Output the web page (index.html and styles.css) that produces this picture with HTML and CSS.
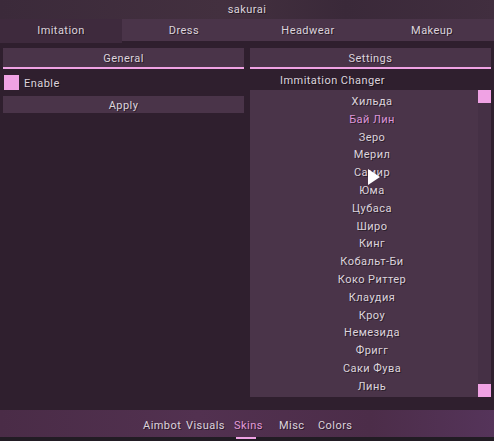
FILE: index.html
```html
<!DOCTYPE html>
<html lang="en">
<head>
    <meta charset="UTF-8">
    <title>sakurai</title>
    <link rel="stylesheet" href="styles.css">
</head>
<body>
    <div class="window">
        <div class="titlebar">sakurai</div>

        <div class="tabs">
            <div class="tab active">Imitation</div>
            <div class="tab">Dress</div>
            <div class="tab">Headwear</div>
            <div class="tab">Makeup</div>
        </div>

        <div class="content">
            <div class="column">
                <div class="section-header">General</div>
                <label class="check-row">
                    <span class="checkbox"></span>
                    <span>Enable</span>
                </label>
                <div class="button">Apply</div>
            </div>

            <div class="column">
                <div class="section-header">Settings</div>
                <div class="field-label">Immitation Changer</div>
                <div class="listbox">
                    <div class="list-items">
                        <div class="list-item">Хильда</div>
                        <div class="list-item selected">Бай Лин</div>
                        <div class="list-item">Зеро</div>
                        <div class="list-item">Мерил</div>
                        <div class="list-item">Самир</div>
                        <div class="list-item">Юма</div>
                        <div class="list-item">Цубаса</div>
                        <div class="list-item">Широ</div>
                        <div class="list-item">Кинг</div>
                        <div class="list-item">Кобальт-Би</div>
                        <div class="list-item">Коко Риттер</div>
                        <div class="list-item">Клаудия</div>
                        <div class="list-item">Кроу</div>
                        <div class="list-item">Немезида</div>
                        <div class="list-item">Фригг</div>
                        <div class="list-item">Саки Фува</div>
                        <div class="list-item">Линь</div>
                    </div>
                    <div class="scrollbar">
                        <span class="thumb"></span>
                        <span class="thumb"></span>
                    </div>
                </div>
            </div>
        </div>

        <div class="bottom-nav">
            <span class="nav-item">Aimbot</span>
            <span class="nav-item">Visuals</span>
            <span class="nav-item active">Skins</span>
            <span class="nav-item">Misc</span>
            <span class="nav-item">Colors</span>
        </div>
        <div class="footer-strip"></div>

        <!-- mouse pointer captured in the screenshot -->
        <svg class="cursor" width="14" height="18" viewBox="0 0 14 18">
            <path d="M1 1 L1 17 L13 9 Z" fill="#ffffff"/>
        </svg>
    </div>
</body>
</html>
```

FILE: styles.css
```css
:root {
    --bg-dark: #2f1f2e;
    --panel: #4a3449;
    --panel-dark: #3e2a3d;
    --accent: #f0a2e4;
    --text: #dcd3dc;
}

* {
    box-sizing: border-box;
    margin: 0;
    padding: 0;
}

body {
    width: 494px;
    height: 441px;
    overflow: hidden;
    background-color: var(--bg-dark);
    font-family: 'Roboto', 'Liberation Sans', sans-serif;
    font-size: 11px;
    letter-spacing: 0.45px;
    color: var(--text);
    text-shadow: 1px 1px 0 rgba(0,0,0,0.45);
}

.window {
    position: relative;
    height: 441px;
    display: flex;
    flex-direction: column;
}

.titlebar {
    height: 19px;
    line-height: 20px;
    text-align: center;
    background: linear-gradient(90deg, #3b2a3a 0%, #43303f 45%, #3a2939 70%, #412e3f 100%);
}

.tabs {
    height: 22px;
    display: grid;
    grid-template-columns: 122px 1fr 1fr 1fr;
    background-color: var(--panel);
}

.tab {
    line-height: 24px;
    text-align: center;
}

.tab.active {
    background-color: var(--panel-dark);
}

.content {
    flex: 1;
    display: grid;
    grid-template-columns: 241px 241px;
    gap: 6px;
    padding: 7px 3px 0 3px;
}

.column {
    display: flex;
    flex-direction: column;
}

.section-header {
    height: 21px;
    line-height: 21px;
    text-align: center;
    background-color: var(--panel);
    border-bottom: 2px solid var(--accent);
}

.check-row {
    display: flex;
    align-items: center;
    gap: 5px;
    height: 15px;
    margin: 6px 0 6px 1px;
}

.check-row span:last-child {
    padding-top: 2px;
}

.checkbox {
    width: 15px;
    height: 15px;
    background-color: var(--accent);
}

.button {
    height: 17px;
    line-height: 19px;
    text-align: center;
    background-color: var(--panel);
}

.field-label {
    height: 21px;
    line-height: 23px;
    padding-left: 30px;
}

.listbox {
    height: 307px;
    display: flex;
    background-color: var(--panel);
}

.list-items {
    flex: 1;
    padding: 3px 0 0 16px;
}

.list-item {
    height: 17.8px;
    line-height: 17.8px;
    text-align: center;
}

.list-item.selected {
    color: #dc94d8;
}

.scrollbar {
    width: 13px;
    display: flex;
    flex-direction: column;
    justify-content: space-between;
    background-color: #453045;
}

.thumb {
    width: 13px;
    height: 13px;
    background-color: var(--accent);
}

.bottom-nav {
    height: 27px;
    margin-top: 13px;
    display: flex;
    align-items: center;
    padding: 3px 0 0 143px;
    background: linear-gradient(90deg, #4a2c47 0%, #523150 40%, #4c2d49 75%, #55345a 100%);
}

.nav-item {
    position: relative;
}

.nav-item:nth-child(1) {
    width: 43px;
}

.nav-item:nth-child(2) {
    width: 48px;
}

.nav-item:nth-child(3) {
    width: 45px;
}

.nav-item:nth-child(4) {
    width: 39px;
}

.nav-item.active {
    color: #e29ad8;
}

.nav-item.active::after {
    content: '';
    position: absolute;
    left: 2px;
    bottom: -7px;
    width: 20px;
    height: 2px;
    background-color: var(--accent);
}

.footer-strip {
    height: 4px;
    background-color: #221c24;
}

.cursor {
    position: absolute;
    left: 367px;
    top: 168px;
}
```
